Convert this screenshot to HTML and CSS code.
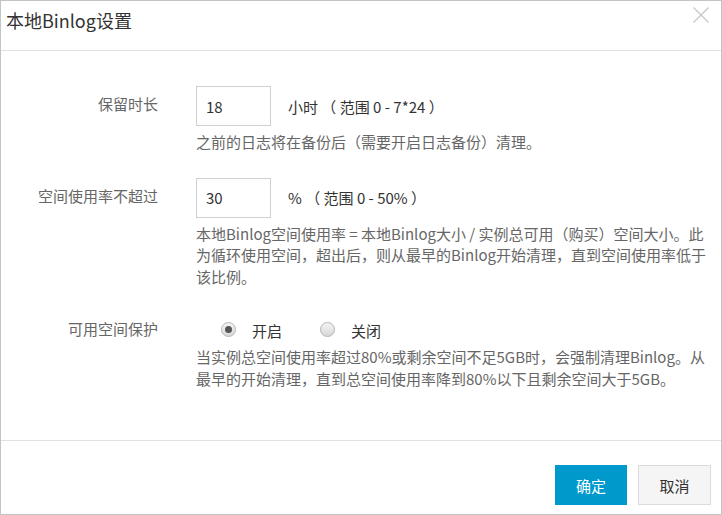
FILE: index.html
```html
<!DOCTYPE html>
<html lang="zh-CN">
<head>
<meta charset="utf-8">
<title>本地Binlog设置</title>
<link rel="stylesheet" href="styles.css">
</head>
<body>
<div class="dialog">
  <div class="dialog-header">
    <h1 class="dialog-title">本地Binlog设置</h1>
    <button class="close-btn" aria-label="关闭">
      <svg width="16" height="16" viewBox="0 0 16 16"><path d="M0.5 0.5L15.5 15.5M15.5 0.5L0.5 15.5" stroke="#c9c9c9" stroke-width="1.4" fill="none"/></svg>
    </button>
  </div>
  <div class="dialog-body">
    <div class="form-grid">
      <div class="form-label">保留时长</div>
      <div class="form-field">
        <div class="control-line">
          <input class="num-input" type="text" value="18">
          <span class="unit">小时 （ 范围 0 - 7*24 ）</span>
        </div>
        <p class="help">之前的日志将在备份后（需要开启日志备份）清理。</p>
      </div>

      <div class="form-label">空间使用率不超过</div>
      <div class="form-field">
        <div class="control-line">
          <input class="num-input" type="text" value="30">
          <span class="unit">% （ 范围 0 - 50% ）</span>
        </div>
        <p class="help">本地Binlog空间使用率 = 本地Binlog大小 / 实例总可用（购买）空间大小。此为循环使用空间，超出后，则从最早的Binlog开始清理，直到空间使用率低于该比例。</p>
      </div>

      <div class="form-label form-label-radio">可用空间保护</div>
      <div class="form-field">
        <div class="radio-line">
          <label class="radio"><span class="radio-dot checked"></span><span class="radio-text">开启</span></label>
          <label class="radio"><span class="radio-dot"></span><span class="radio-text">关闭</span></label>
        </div>
        <p class="help">当实例总空间使用率超过80%或剩余空间不足5GB时，会强制清理Binlog。从最早的开始清理，直到总空间使用率降到80%以下且剩余空间大于5GB。</p>
      </div>
    </div>
  </div>
  <div class="dialog-footer">
    <button class="btn btn-primary">确定</button>
    <button class="btn btn-default">取消</button>
  </div>
</div>
</body>
</html>
```

FILE: styles.css
```css
html, body {
  margin: 0;
  padding: 0;
  background: #fff;
}

body {
  font-family: "Noto Sans CJK SC", "Noto Sans", sans-serif;
  font-size: 15px;
  color: #333;
}

.dialog {
  width: 722px;
  height: 515px;
  box-sizing: border-box;
  border: 1px solid #c4c4c4;
  display: flex;
  flex-direction: column;
  background: #fff;
}

.dialog-header {
  height: 50px;
  box-sizing: border-box;
  border-bottom: 1px solid #e2e2e2;
  display: flex;
  justify-content: space-between;
  align-items: flex-start;
  padding: 0 12px 0 5px;
}

.dialog-title {
  margin: 6px 0 0;
  font-size: 18px;
  font-weight: normal;
  line-height: 26px;
  color: #333;
}

.close-btn {
  margin-top: 6px;
  padding: 0;
  border: 0;
  background: transparent;
  width: 16px;
  height: 16px;
  display: block;
}

.close-btn svg {
  display: block;
}

.dialog-body {
  flex: 1;
  padding-top: 35px;
}

.form-grid {
  display: grid;
  grid-template-columns: 157px 510px;
  column-gap: 38px;
  row-gap: 25px;
}

.form-label {
  text-align: right;
  line-height: 36px;
  color: #666;
}

.form-label-radio {
  line-height: 24px;
  padding-top: 5px;
}

.control-line {
  display: flex;
  align-items: center;
  height: 40px;
}

.num-input {
  width: 75px;
  height: 40px;
  box-sizing: border-box;
  border: 1px solid #d0d0d0;
  padding: 0 9px;
  font: inherit;
  font-size: 15px;
  color: #333;
  outline: none;
}

.unit {
  margin-left: 17px;
  color: #333;
}

.help {
  margin: 5px 0 0;
  line-height: 21.5px;
  color: #666;
}

.radio-line {
  display: flex;
  align-items: center;
  height: 24px;
  padding-top: 5px;
  padding-left: 25px;
}

.radio {
  display: flex;
  align-items: center;
  margin-right: 38px;
  color: #333;
}

.radio-dot {
  width: 15px;
  height: 15px;
  box-sizing: border-box;
  border-radius: 50%;
  border: 1px solid #b4b4b4;
  background: linear-gradient(#f4f4f4, #d8d8d8);
  display: flex;
  align-items: center;
  justify-content: center;
}

.radio-dot.checked::after {
  content: "";
  width: 7px;
  height: 7px;
  border-radius: 50%;
  background: #555;
}

.radio-text {
  margin-left: 16px;
  margin-top: 3px;
}

.dialog-footer {
  height: 74px;
  box-sizing: border-box;
  border-top: 1px solid #e2e2e2;
  display: flex;
  justify-content: flex-end;
  align-items: flex-start;
  gap: 11px;
  padding: 24px 10px 0 0;
}

.btn {
  height: 40px;
  box-sizing: border-box;
  font: inherit;
  font-size: 15px;
  padding: 0;
  cursor: pointer;
}

.btn-primary {
  width: 72px;
  background: #0099cc;
  color: #fff;
  border: 0;
}

.btn-default {
  width: 73px;
  background: #f5f5f5;
  color: #333;
  border: 1px solid #dcdcdc;
}
```
